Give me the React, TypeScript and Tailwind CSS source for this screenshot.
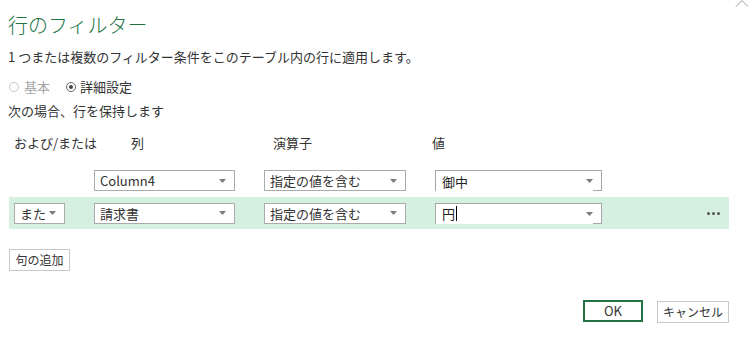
import React from 'react';

const FONT = { fontFamily: '"Noto Sans CJK JP", "Noto Sans", sans-serif' };

function Caret() {
  return (
    <svg width="7" height="4" viewBox="0 0 7 4" className="shrink-0">
      <path d="M0 0 L7 0 L3.5 4 Z" fill="#7a7a7a" />
    </svg>
  );
}

function Select({ label, width }: { label: string; width: string }) {
  return (
    <div
      className={`${width} h-[21px] border border-[#ababab] bg-white flex items-center justify-between pl-[5px] pr-[8px] text-[13px] text-[#333]`}
    >
      <span className="leading-none">{label}</span>
      <Caret />
    </div>
  );
}

// Value combobox: odd partial border, as in the reference
function ValueBox({ value, cursor }: { value: string; cursor?: boolean }) {
  return (
    <div className="relative w-[167px] h-[21px] border-t border-l border-r border-[#a6a6a6] bg-white flex items-center justify-between pl-[6px] pr-[8px] text-[13px] text-[#222]">
      <span className="flex items-center leading-none">
        {value}
        {cursor && <span className="inline-block w-px h-[15px] bg-black ml-[1px]" />}
      </span>
      <Caret />
      <div className="absolute right-[-1px] bottom-0 w-[9px] border-b border-[#a6a6a6]" />
    </div>
  );
}

export default function App() {
  return (
    <div className="relative w-[753px] h-[342px] bg-white overflow-hidden" style={FONT}>
      <svg className="absolute left-[735px] top-0" width="14" height="7" viewBox="0 0 14 7">
        <path d="M1 6.5 L7 0.5 L13 6.5" fill="none" stroke="#9a9a9a" strokeWidth="1" />
      </svg>

      <div className="pl-2 pt-[12px] text-[20px] leading-[26px] font-light text-[#217346]">行のフィルター</div>

      <div className="pl-2 mt-[10px] text-[13px] leading-[18px] text-[#333]">
        1 つまたは複数のフィルター条件をこのテーブル内の行に適用します。
      </div>

      <div className="pl-[9px] mt-[12px] flex items-center h-[18px] text-[13px]">
        <span className="w-[10px] h-[10px] rounded-full border border-[#c8c8c8]" />
        <span className="ml-[5px] text-[#a6a6a6]">基本</span>
        <span className="ml-[16px] w-[10px] h-[10px] rounded-full border border-[#666] flex items-center justify-center">
          <span className="w-[4px] h-[4px] rounded-full bg-[#444]" />
        </span>
        <span className="ml-[4px] text-[#333]">詳細設定</span>
      </div>

      <div className="pl-2 mt-[6px] text-[13px] leading-[18px] text-[#333]">次の場合、行を保持します</div>

      <div className="mt-[14px] pl-[14px] flex text-[13px] leading-[18px] text-[#333]">
        <span className="w-[117px]">および/または</span>
        <span className="w-[142px]">列</span>
        <span className="w-[159px]">演算子</span>
        <span>値</span>
      </div>

      <div className="mt-[18px] ml-[9px] w-[720px] pl-[5px] flex items-center gap-[29px]">
        <div className="w-[51px]" />
        <Select label="Column4" width="w-[141px]" />
        <Select label="指定の値を含む" width="w-[142px]" />
        <ValueBox value="御中" />
      </div>

      <div className="mt-[6px] ml-[9px] w-[720px] h-[32px] pl-[5px] bg-[#d5efe1] flex items-center gap-[29px]">
        <Select label="また" width="w-[51px]" />
        <Select label="請求書" width="w-[141px]" />
        <Select label="指定の値を含む" width="w-[142px]" />
        <ValueBox value="円" cursor />
        <div className="ml-[76px] flex gap-[2px]">
          <span className="w-[3px] h-[3px] rounded-full bg-[#555]" />
          <span className="w-[3px] h-[3px] rounded-full bg-[#555]" />
          <span className="w-[3px] h-[3px] rounded-full bg-[#555]" />
        </div>
      </div>

      <button className="mt-[20px] ml-[9px] w-[61px] h-[22px] border border-[#c8c8c8] bg-white text-[12px] text-[#333] flex items-center justify-center">
        句の追加
      </button>

      <div className="mt-[29px] pr-[24px] flex justify-end gap-[14px]">
        <button className="w-[60px] h-[22px] border-2 border-[#217346] bg-white text-[13px] text-[#333] flex items-center justify-center">
          OK
        </button>
        <button className="w-[72px] h-[22px] mt-px border border-[#c8c8c8] bg-white text-[12px] text-[#333] flex items-center justify-center">
          キャンセル
        </button>
      </div>
    </div>
  );
}
